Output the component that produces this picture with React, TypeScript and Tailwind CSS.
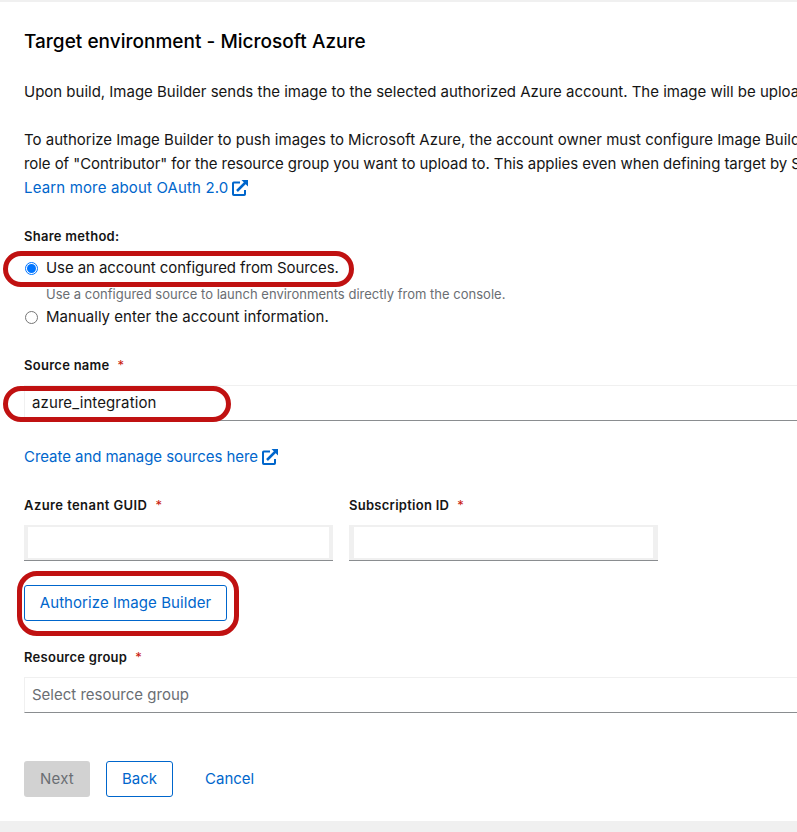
import type { ReactNode } from "react";

function ExternalIcon() {
  return (
    <svg viewBox="0 0 16 16" className="ml-1 h-4 w-4 shrink-0" fill="none" stroke="#0066cc" strokeWidth="2">
      <path d="M8 2.5H1.8Q1 2.5 1 3.3V14.2Q1 15 1.8 15H12.2Q13 15 13 14.2V10" />
      <path d="M5 11L13.5 2.5" strokeWidth="2.5" />
      <path d="M9.5 0H16V6.5Z" fill="#0066cc" stroke="none" />
    </svg>
  );
}

function Label({ children, required = true }: { children: ReactNode; required?: boolean }) {
  return (
    <div className="flex h-[21px] items-center text-[13px] leading-[21px] font-semibold tracking-[0.27px]">
      {children}
      {required && <span className="ml-2 text-[13px] font-normal tracking-normal text-[#c9190b]">*</span>}
    </div>
  );
}

function Field({ children }: { children: ReactNode }) {
  return (
    <div className="mt-[9px] flex h-9 w-[900px] items-center border border-[#f0f0f0] border-b-[#8a8d90] pl-[7px]">
      {children}
    </div>
  );
}

export default function App() {
  return (
    <div className="relative flex h-[832px] w-full flex-col overflow-hidden bg-white font-[Inter,sans-serif] text-[15px] leading-6 whitespace-nowrap text-[#151515]">
      <div className="h-0.5 shrink-0 bg-[#f0f0f0]" />
      <main className="flex flex-1 flex-col pl-6">
        <h1 className="mt-[27px] h-[26px] text-[19px] leading-[26px] font-medium tracking-[0.02px] text-black">Target environment - Microsoft Azure</h1>
        <p className="mt-[25px] tracking-[-0.01px]">Upon build, Image Builder sends the image to the selected authorized Azure account. The image will be uploaded</p>
        <div className="mt-6">
          <p>To authorize Image Builder to push images to Microsoft Azure, the account owner must configure Image Builder</p>
          <p className="tracking-[-0.06px]">role of "Contributor" for the resource group you want to upload to. This applies even when defining target by Source</p>
          <a className="flex items-center text-[#0066cc]"><span className="tracking-[0.15px]">Learn more about OAuth 2.0</span><ExternalIcon /></a>
        </div>
        <div className="mt-[26px]"><Label required={false}><span>Share method:</span></Label></div>
        <div className="mt-[9px] flex h-6 items-center">
          <span className="ml-[1px] flex h-[13px] w-[13px] items-center justify-center rounded-full border border-[#0075ff]"><span className="h-[9px] w-[9px] rounded-full bg-[#0075ff]" /></span>
          <span className="ml-2 tracking-[-0.08px]">Use an account configured from Sources.</span>
        </div>
        <p className="mt-1 ml-[22px] h-[21px] text-[13px] leading-[21px] tracking-[0.01px] text-[#6a6e73]">Use a configured source to launch environments directly from the console.</p>
        <div className="flex h-6 items-center">
          <span className="ml-[1px] h-[13px] w-[13px] rounded-full border border-[#767676]" />
          <span className="ml-2 tracking-[0.02px]">Manually enter the account information.</span>
        </div>
        <div className="mt-[26px]"><Label><span>Source name</span></Label></div>
        <Field><span className="tracking-[0.1px]">azure_integration</span></Field>
        <a className="mt-6 flex items-center text-[#0066cc]"><span className="tracking-[-0.05px]">Create and manage sources here</span><ExternalIcon /></a>
        <div className="mt-[26px] flex gap-4">
          <div className="w-[309px]">
            <Label><span className="tracking-[0.42px]">Azure tenant GUID</span></Label>
            <div className="mt-[9px] h-9 border-b border-[#8a8d90]"><div className="h-[35px] border-x-4 border-y-2 border-[#f0f0f0]" /></div>
          </div>
          <div className="w-[309px]">
            <Label><span>Subscription ID</span></Label>
            <div className="mt-[9px] h-9 border-b border-[#8a8d90]"><div className="h-[35px] border-x-[5px] border-y-2 border-[#f0f0f0]" /></div>
          </div>
        </div>
        <button className="mt-6 flex h-9 w-[203px] items-center justify-center rounded-[3px] border border-[#0066cc] tracking-[0.07px] text-[#0066cc]">Authorize Image Builder</button>
        <div className="mt-[26px]"><Label><span>Resource group</span></Label></div>
        <Field><span className="text-[#6a6e73]">Select resource group</span></Field>
        <div className="mt-12 flex h-9">
          <button className="w-[66px] rounded-[3px] bg-[#d2d2d2] tracking-[0.2px] text-[#6a6e73]">Next</button>
          <button className="ml-4 w-[67px] rounded-[3px] border border-[#0066cc] text-[#0066cc]">Back</button>
          <button className="ml-8 text-[#0066cc]">Cancel</button>
        </div>
      </main>
      <footer className="h-[11px] shrink-0 bg-[#f0f0f0]" />
      <div className="absolute top-[251px] left-[3px] h-9 w-[351px] rounded-[18px] border-5 border-[#c01111]" />
      <div className="absolute top-[386px] left-[3px] h-9 w-[228px] rounded-[18px] border-5 border-[#c01111]" />
      <div className="absolute top-[571px] left-[17px] h-[65px] w-[222px] rounded-[20px] border-5 border-[#c01111]" />
    </div>
  );
}
